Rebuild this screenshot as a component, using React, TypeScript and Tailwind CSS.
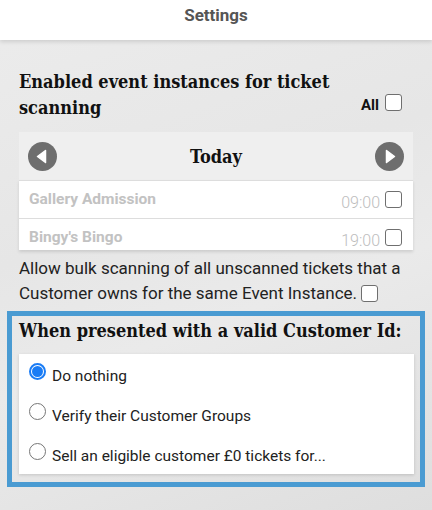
import React from 'react';

const slab = { fontFamily: '"DejaVu Serif", "Liberation Serif", serif', fontStretch: 'condensed' as const };

function Box({ className = '' }: { className?: string }) {
  return <span className={`inline-block w-[17px] h-[17px] rounded-[3px] border border-[#6f6f6f] bg-white ${className}`} />;
}

function Arrow({ dir }: { dir: 'left' | 'right' }) {
  return (
    <svg width="29" height="29" viewBox="0 0 29 29">
      <circle cx="14.5" cy="14.5" r="14.5" fill="#6e6e6e" />
      {dir === 'left' ? (
        <path d="M17.5 8.5 L9.5 14.5 L17.5 20.5 Z" fill="#fff" stroke="#fff" strokeWidth="1.5" strokeLinejoin="round" />
      ) : (
        <path d="M11.5 8.5 L19.5 14.5 L11.5 20.5 Z" fill="#fff" stroke="#fff" strokeWidth="1.5" strokeLinejoin="round" />
      )}
    </svg>
  );
}

function Radio({ checked, label }: { checked?: boolean; label: string }) {
  return (
    <div className="h-10 flex items-center pl-[10px]">
      {checked ? (
        <span className="w-[17px] h-[17px] rounded-full border-2 border-[#1a7cf5] bg-white flex items-center justify-center -mt-[6px]">
          <span className="w-[11px] h-[11px] rounded-full bg-[#1a7cf5]" />
        </span>
      ) : (
        <span className="w-[17px] h-[17px] rounded-full border border-[#767676] bg-white -mt-[6px]" />
      )}
      <span className="ml-[6px] mt-[6px] text-[15.5px] text-[#222]">{label}</span>
    </div>
  );
}

const events = [
  { name: 'Gallery Admission', time: '09:00' },
  { name: "Bingy's Bingo", time: '19:00' },
];

export default function App() {
  return (
    <div
      className="w-full min-h-[510px] bg-[#e7e7e7] bg-[linear-gradient(160deg,#ececec_0%,#e6e6e6_40%,#eaeaea_60%,#dedede_100%)]"
      style={{ fontFamily: 'Roboto, "Liberation Sans", sans-serif' }}
    >
      {/* header */}
      <div className="h-10 bg-white flex items-center justify-center shadow-[0_2px_4px_rgba(0,0,0,0.12)] relative">
        <span className="text-[17px] font-bold text-[#555] -mt-[8px]">Settings</span>
      </div>

      <div className="px-[19px] pt-[29px]">
        {/* heading */}
        <div className="flex items-end justify-between">
          <h2 className="text-[18px] font-bold leading-[26px] text-[#111] max-w-[330px]" style={slab}>
            Enabled event instances for ticket scanning
          </h2>
          <div className="flex items-center pr-[11px] mb-[5px]">
            <span className="text-[15px] font-bold text-[#111] mr-[6px] mt-[4px]">All</span>
            <Box />
          </div>
        </div>

        {/* date nav */}
        <div className="mt-[11px] h-12 bg-[#efefef] flex items-center justify-between px-[9px]">
          <Arrow dir="left" />
          <span className="text-[18px] font-bold text-[#111]" style={slab}>Today</span>
          <Arrow dir="right" />
        </div>

        <div className="h-[70px] overflow-hidden bg-white shadow-[0_2px_3px_rgba(0,0,0,0.12)]">
          {events.map((e) => (
            <div key={e.name} className="h-[38px] border-t border-[#ddd] flex items-center pl-[10px] pr-[11px]">
              <span className="flex-1 text-[15.5px] font-bold text-[#c2c2c2]">{e.name}</span>
              <span className="text-[16px] font-light text-[#bdbdbd] mt-[6px] mr-[5px]">{e.time}</span>
              <Box />
            </div>
          ))}
        </div>

        <p className="mt-[6px] text-[17px] leading-[25px] text-[#222]">
          Allow bulk scanning of all unscanned tickets that a Customer owns for the same Event Instance.{' '}
          <Box className="align-[-3px]" />
        </p>

        {/* customer id box */}
        <div className="-mx-[12px] mt-[5px] border-[5px] border-[#4a9bd2] pt-[2px] pl-[7px] pr-[6px] pb-[8px]">
          <h2 className="text-[18px] font-bold leading-[26px] text-[#111]" style={slab}>
            When presented with a valid Customer Id:
          </h2>
          <div className="mt-[10px] bg-white shadow-[0_1px_3px_rgba(0,0,0,0.15)]">
            <Radio checked label="Do nothing" />
            <Radio label="Verify their Customer Groups" />
            <Radio label="Sell an eligible customer £0 tickets for..." />
          </div>
        </div>
      </div>
    </div>
  );
}
